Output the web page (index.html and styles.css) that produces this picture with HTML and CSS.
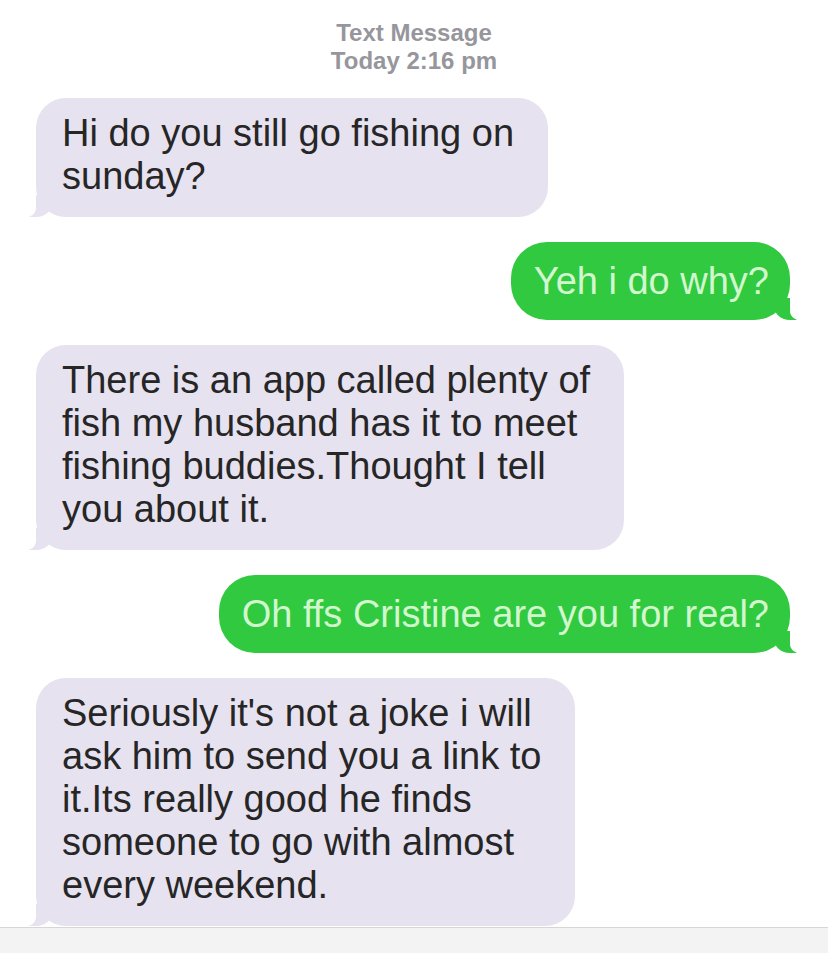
FILE: index.html
```html
<!DOCTYPE html>
<html lang="en">
<head>
    <meta charset="UTF-8">
    <meta name="viewport" content="width=device-width, initial-scale=1.0">
    <title>Text Message</title>
    <link rel="stylesheet" href="styles.css">
</head>
<body>
    <div class="screen">
        <div class="thread-header">
            <div class="thread-title">Text Message</div>
            <div class="thread-time">Today 2:16 pm</div>
        </div>

        <div class="messages">
            <div class="row in">
                <div class="bubble">Hi do you still go fishing on<br>sunday?</div>
            </div>
            <div class="row out">
                <div class="bubble">Yeh i do why?</div>
            </div>
            <div class="row in">
                <div class="bubble">There is an app called plenty of<br>fish my husband has it to meet<br>fishing buddies.Thought I tell<br>you about it.</div>
            </div>
            <div class="row out">
                <div class="bubble">Oh ffs Cristine are you for real?</div>
            </div>
            <div class="row in">
                <div class="bubble">Seriously it's not a joke i will<br>ask him to send you a link to<br>it.Its really good he finds<br>someone to go with almost<br>every weekend.</div>
            </div>
        </div>
    </div>
    <div class="bottom-bar"></div>
</body>
</html>
```

FILE: styles.css
```css
body {
    margin: 0;
    background-color: #FFFFFF;
    font-family: 'Liberation Sans', Arial, sans-serif;
    color: #222;
}

.screen {
    height: 928px;
    overflow: hidden;
    border-bottom: 1px solid #d6d6d6;
    box-sizing: border-box;
}

.thread-header {
    text-align: center;
    padding-top: 19px;
    color: #96969c;
    font-weight: bold;
    font-size: 24px;
    line-height: 28px;
}

.messages {
    display: flex;
    flex-direction: column;
    gap: 25px;
    padding: 23px 38px 0 36px;
}

.row {
    display: flex;
}

.row.out {
    justify-content: flex-end;
}

.bubble {
    position: relative;
    white-space: nowrap;
    border-radius: 30px;
}

.row.in .bubble {
    background-color: #e6e2ef;
    color: #262626;
    font-size: 38px;
    line-height: 43px;
    padding: 14px 34px 19px 26px;
}

.row.out .bubble {
    background-color: #30c93f;
    color: #d2f7cf;
    font-size: 38px;
    line-height: 40px;
    padding: 19px 21px 19px 23px;
    border-radius: 36px;
}

/* little tails */
.row.in .bubble::before {
    content: "";
    position: absolute;
    left: -10px;
    bottom: 0;
    width: 26px;
    height: 22px;
    background-color: #e6e2ef;
    border-bottom-right-radius: 16px 14px;
}

.row.in .bubble::after {
    content: "";
    position: absolute;
    left: -16px;
    bottom: -1px;
    width: 16px;
    height: 24px;
    background-color: #FFFFFF;
    border-bottom-right-radius: 12px 10px;
}

.row.out .bubble::before {
    content: "";
    position: absolute;
    right: -10px;
    bottom: 0;
    width: 26px;
    height: 22px;
    background-color: #30c93f;
    border-bottom-left-radius: 16px 14px;
}

.row.out .bubble::after {
    content: "";
    position: absolute;
    right: -16px;
    bottom: -1px;
    width: 16px;
    height: 24px;
    background-color: #FFFFFF;
    border-bottom-left-radius: 12px 10px;
}

.bottom-bar {
    height: 25px;
    background-color: #f3f3f3;
}
```
